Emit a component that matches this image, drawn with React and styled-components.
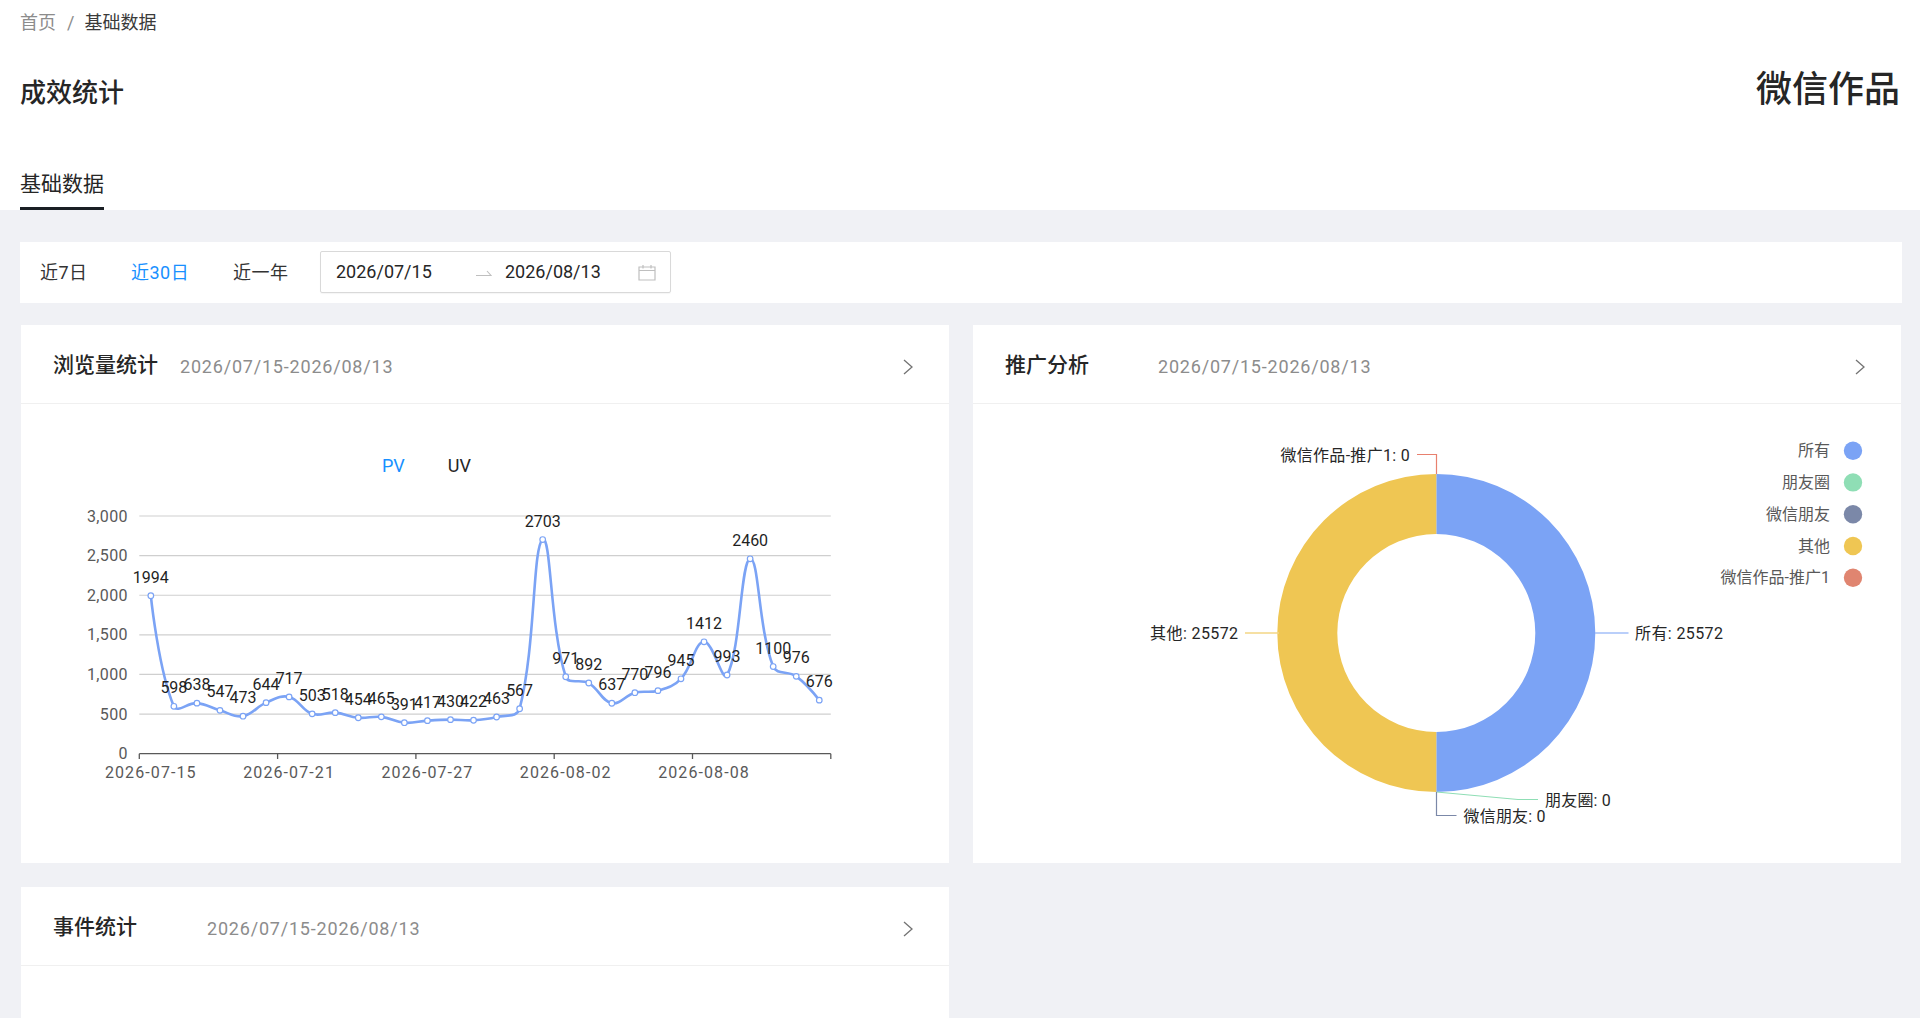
import React from 'react';
import styled, { createGlobalStyle } from 'styled-components';

const FONT = `Roboto, "Noto Sans CJK SC", "Liberation Sans", sans-serif`;

const Global = createGlobalStyle`
  html, body { margin: 0; padding: 0; height: 100%; overflow: hidden; background: #f0f1f5; }
  body { font-family: ${FONT}; color: #262626; }
  * { box-sizing: border-box; }
`;

const Page = styled.div`
  height: 1018px;
  overflow: hidden;
  background: #f0f1f5;
`;
const Header = styled.header`
  height: 210px;
  background: #fff;
  padding: 0 20px;
  display: flex;
  flex-direction: column;
`;
const Breadcrumb = styled.nav`
  display: flex;
  align-items: center;
  height: 45px;
  font-size: 18px;
  line-height: 45px;
`;
const CrumbLink = styled.span`color: #8c8c8c;`;
const CrumbSep = styled.span`color: #8c8c8c; margin: 0 10px 0 11px;`;
const CrumbCurrent = styled.span`color: #3a3a3a;`;
const TitleRow = styled.div`
  display: flex;
  justify-content: space-between;
  align-items: center;
  height: 96px;
`;
const PageTitle = styled.h1`
  margin: 0;
  font-size: 26px;
  line-height: 36px;
  font-weight: 500;
  color: #262626;
`;
const Brand = styled.div`
  font-size: 36px;
  line-height: 44px;
  font-weight: 500;
  color: #262626;
  margin-top: -6px;
`;
const Tabs = styled.div`
  margin-top: auto;
  display: flex;
`;
const Tab = styled.div`
  font-size: 21px;
  line-height: 30px;
  padding-bottom: 8px;
  color: #262626;
  border-bottom: 3px solid #1a1f24;
`;
const Content = styled.main`
  padding: 32px 18px 0 20px;
`;
const FilterBar = styled.div`
  height: 61px;
  background: #fff;
  display: flex;
  align-items: center;
  padding-left: 20px;
  font-size: 18px;
`;
const Range = styled.button`
  all: unset;
  font-size: 18px;
  line-height: 26px;
  letter-spacing: .5px;
  width: ${p => p.$width}px;
  color: ${p => (p.$active ? '#1890ff' : '#333')};
`;
const DatePicker = styled.div`
  width: 351px;
  height: 42px;
  margin-top: -1px;
  border: 1px solid #d9d9d9;
  border-radius: 2px;
  display: flex;
  align-items: center;
  padding-left: 15px;
  color: #262626;
  box-shadow: 0 1px 1px rgba(0,0,0,.04);
`;
const DateValue = styled.span`
  width: ${p => p.$width}px;
  font-size: 18px;
  line-height: 26px;
`;
const ArrowIcon = styled.svg`
  width: 16px;
  height: 10px;
  margin-right: 13px;
  color: #bfbfbf;
`;
const CalIcon = styled.svg`
  width: 18px;
  height: 17px;
  color: #bfbfbf;
`;
const Grid = styled.div`
  display: grid;
  grid-template-columns: 928px 928px;
  column-gap: 24px;
  row-gap: 24px;
  margin: 22px 0 0 1px;
`;
const Card = styled.section`
  background: #fff;
  height: ${p => p.$height}px;
`;
const CardHead = styled.div`
  height: 79px;
  border-bottom: 1px solid #f0f0f0;
  display: flex;
  align-items: center;
  padding: 2px 32px 0;
`;
const CardTitle = styled.h2`
  margin: 0;
  font-size: 21px;
  line-height: 30px;
  font-weight: 500;
  color: #262626;
`;
const CardDate = styled.span`
  margin: 2px 0 0 ${p => p.$gap}px;
  font-size: 18px;
  letter-spacing: .8px;
  color: #8c8c8c;
`;
const Chevron = styled.svg`
  margin: 3px 3px 0 auto;
  width: 12px;
  height: 16px;
  color: #737373;
`;
const SeriesTabs = styled.div`
  display: flex;
  gap: 43px;
  height: 23px;
  margin: 50px 0 0 361px;
  font-size: 18px;
  line-height: 24px;
`;
const Series = styled.span`
  color: ${p => (p.$active ? '#1890ff' : '#262626')};
`;
const ChartSvg = styled.svg`
  display: block;
  width: ${p => p.$w}px;
  height: ${p => p.$h}px;
  font-family: ${FONT};
`;

const data = [1994,598,638,547,473,644,717,503,518,454,465,391,417,430,422,463,567,2703,971,892,637,770,796,945,1412,993,2460,1100,976,676];
const X0 = 139.3, X1 = 830.8, BAND = (X1 - X0) / 30;
const yOf = v => 753.7 - (v / 3000) * 237.7;
const pts = data.map((v, i) => [X0 + BAND * (i + 0.5), yOf(v)]);
const SMOOTH = 0.4;
const linePath = () => {
  const before = [], after = [];
  pts.forEach((p, i) => {
    if (i === 0 || i === pts.length - 1) { before[i] = p; after[i] = p; return; }
    const a = pts[i - 1], b = pts[i + 1];
    const vx = (b[0] - a[0]) * SMOOTH, vy = (b[1] - a[1]) * SMOOTH;
    const d0 = Math.hypot(p[0] - a[0], p[1] - a[1]), d1 = Math.hypot(b[0] - p[0], b[1] - p[1]);
    const s = d0 + d1 || 1;
    before[i] = [p[0] - vx * d0 / s, p[1] - vy * d0 / s];
    after[i] = [p[0] + vx * d1 / s, p[1] + vy * d1 / s];
  });
  let d = `M${pts[0][0]} ${pts[0][1]}`;
  for (let i = 0; i < pts.length - 1; i++) {
    d += `C${after[i][0]} ${after[i][1]} ${before[i + 1][0]} ${before[i + 1][1]} ${pts[i + 1][0]} ${pts[i + 1][1]}`;
  }
  return d;
};
const yTicks = [[3000,'3,000'],[2500,'2,500'],[2000,'2,000'],[1500,'1,500'],[1000,'1,000'],[500,'500'],[0,'0']];
const xLabels = [[0,'2026-07-15'],[6,'2026-07-21'],[12,'2026-07-27'],[18,'2026-08-02'],[24,'2026-08-08']];

const LineChart = () => (
  <ChartSvg $w={928} $h={380} viewBox="21 477 928 380">
    {yTicks.filter(t => t[0] > 0).map(([v]) => (
      <line key={v} x1={X0} x2={X1} y1={yOf(v)} y2={yOf(v)} stroke="#cfcfcf" strokeWidth="1.2" />
    ))}
    {yTicks.map(([v, l]) => (
      <text key={v} x={128} y={yOf(v) + 5.5} textAnchor="end" fontSize="16" letterSpacing=".4" fill="#595959">{l}</text>
    ))}
    <line x1={X0} x2={X1} y1={753.7} y2={753.7} stroke="#595959" strokeWidth="1.3" />
    {[0,6,12,18,24,30].map(i => (
      <line key={i} x1={X0 + BAND * i} x2={X0 + BAND * i} y1={753.7} y2={759} stroke="#595959" strokeWidth="1.3" />
    ))}
    {xLabels.map(([i, l]) => (
      <text key={i} x={pts[i][0]} y={777.5} textAnchor="middle" fontSize="16" letterSpacing="1.1" fill="#595959">{l}</text>
    ))}
    <path d={linePath()} fill="none" stroke="#7ba3f5" strokeWidth="2.6" />
    {pts.map((p, i) => (
      <circle key={i} cx={p[0]} cy={p[1]} r="2.8" fill="#fff" stroke="#7ba3f5" strokeWidth="1.2" />
    ))}
    {pts.map((p, i) => (
      <text key={i} x={p[0]} y={p[1] - 13} textAnchor="middle" fontSize="16" fill="#1f1f1f">{data[i]}</text>
    ))}
  </ChartSvg>
);

const CX = 1436.3, CY = 633, RO = 159, RI = 99;
const legend = [
  ['所有', '#7ba3f5', 450.7],
  ['朋友圈', '#8fdeb5', 482.4],
  ['微信朋友', '#7b88a8', 514.3],
  ['其他', '#efc653', 546],
  ['微信作品-推广1', '#e08570', 577.7],
];
const Donut = () => (
  <ChartSvg $w={928} $h={459} viewBox="973 404 928 459">
    <path d={`M${CX} ${CY - RO}A${RO} ${RO} 0 0 1 ${CX} ${CY + RO}V${CY + RI}A${RI} ${RI} 0 0 0 ${CX} ${CY - RI}Z`} fill="#7ba3f5" />
    <path d={`M${CX} ${CY + RO}A${RO} ${RO} 0 0 1 ${CX} ${CY - RO}V${CY - RI}A${RI} ${RI} 0 0 0 ${CX} ${CY + RI}Z`} fill="#efc653" />
    <path d="M1436.5 474V454.5H1417" fill="none" stroke="#e8806e" strokeWidth="1.2" />
    <path d="M1595 633H1628.5" fill="none" stroke="#a3bff8" strokeWidth="1.4" />
    <path d="M1279 633H1245" fill="none" stroke="#f3d684" strokeWidth="1.4" />
    <path d="M1436.5 792L1518 799.5H1538" fill="none" stroke="#8fdeb5" strokeWidth="1.2" />
    <path d="M1436.5 792V815.5H1456.5" fill="none" stroke="#7b88a8" strokeWidth="1.2" />
    <text x={1410} y={460.5} textAnchor="end" fontSize="16" letterSpacing=".3" fill="#262626">微信作品-推广1: 0</text>
    <text x={1635} y={638.5} fontSize="16" letterSpacing=".4" fill="#262626">所有: 25572</text>
    <text x={1238.5} y={638.5} textAnchor="end" fontSize="16" letterSpacing=".4" fill="#262626">其他: 25572</text>
    <text x={1545} y={805.5} fontSize="16" letterSpacing=".2" fill="#262626">朋友圈: 0</text>
    <text x={1463.5} y={821.5} fontSize="16" letterSpacing=".2" fill="#262626">微信朋友: 0</text>
    {legend.map(([l, c, y]) => (
      <g key={l}>
        <text x={1830} y={y + 5.5} textAnchor="end" fontSize="16" fill="#595959">{l}</text>
        <circle cx={1853} cy={y} r="9.2" fill={c} />
      </g>
    ))}
  </ChartSvg>
);

const Head = ({ title, gap }) => (
  <CardHead>
    <CardTitle>{title}</CardTitle>
    <CardDate $gap={gap}>2026/07/15-2026/08/13</CardDate>
    <Chevron viewBox="0 0 12 16"><path d="M2 1l8 7-8 7" fill="none" stroke="currentColor" strokeWidth="1.3" /></Chevron>
  </CardHead>
);

export default function App() {
  return (
    <Page>
      <Global />
      <Header>
        <Breadcrumb>
          <CrumbLink>首页</CrumbLink>
          <CrumbSep>/</CrumbSep>
          <CrumbCurrent>基础数据</CrumbCurrent>
        </Breadcrumb>
        <TitleRow>
          <PageTitle>成效统计</PageTitle>
          <Brand>微信作品</Brand>
        </TitleRow>
        <Tabs><Tab>基础数据</Tab></Tabs>
      </Header>
      <Content>
        <FilterBar>
          <Range $width={91}>近7日</Range>
          <Range $width={102} $active>近30日</Range>
          <Range $width={87}>近一年</Range>
          <DatePicker>
            <DateValue $width={140}>2026/07/15</DateValue>
            <ArrowIcon viewBox="0 0 16 10"><path d="M0 8.5H15L11 4" fill="none" stroke="currentColor" strokeWidth="1.1" /></ArrowIcon>
            <DateValue $width={133}>2026/08/13</DateValue>
            <CalIcon viewBox="0 0 18 17"><path d="M1 3h16v13H1zM1 6.5h16M5 1v3.5M13 1v3.5" fill="none" stroke="currentColor" strokeWidth="1.2" /></CalIcon>
          </DatePicker>
        </FilterBar>
        <Grid>
          <Card $height={538}>
            <Head title="浏览量统计" gap={22} />
            <SeriesTabs><Series $active>PV</Series><Series>UV</Series></SeriesTabs>
            <LineChart />
          </Card>
          <Card $height={538}>
            <Head title="推广分析" gap={69} />
            <Donut />
          </Card>
          <Card $height={300}>
            <Head title="事件统计" gap={70} />
          </Card>
        </Grid>
      </Content>
    </Page>
  );
}
